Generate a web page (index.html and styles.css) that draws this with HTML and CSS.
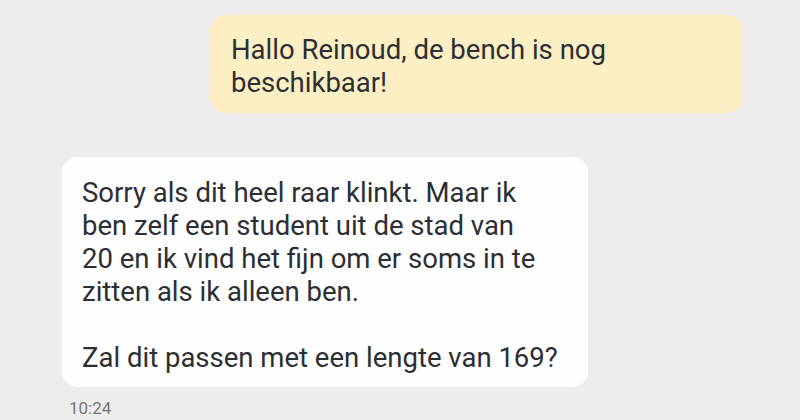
FILE: index.html
```html
<!DOCTYPE html>
<html lang="nl">
<head>
  <meta charset="UTF-8">
  <title>Chat</title>
  <link rel="stylesheet" href="styles.css">
</head>
<body>
  <div class="chat">
    <div class="bubble outgoing">
      Hallo Reinoud, de bench is nog beschikbaar!
    </div>

    <div class="bubble incoming">
      Sorry als dit heel raar klinkt. Maar ik<br>
      ben zelf een student uit de stad van<br>
      20 en ik vind het fijn om er soms in te<br>
      zitten als ik alleen ben.<br>
      <br>
      Zal dit passen met een lengte van 169?
    </div>
    <div class="time">10:24</div>
  </div>
</body>
</html>
```

FILE: styles.css
```css
body {
  margin: 0;
  background: #eeedeb;
  font-family: Roboto, 'Noto Sans', sans-serif;
  color: #2b2f33;
}
.chat {
  display: flex;
  flex-direction: column;
  padding-top: 15px;
  height: 420px;
  box-sizing: border-box;
  overflow: hidden;
}
.bubble {
  box-sizing: border-box;
  font-size: 27.5px;
  line-height: 33px;
  border-radius: 15px;
}
.outgoing {
  align-self: flex-start;
  margin-left: 210px;
  width: 532px;
  padding: 18px 21px 14px 21px;
  background: #fdefc4;
}
.incoming {
  align-self: flex-start;
  margin-left: 62px;
  margin-top: 44px;
  width: 526px;
  padding: 19px 12px 13px 20px;
  background: #fefefe;
  white-space: nowrap;
}
.time {
  margin-left: 69px;
  margin-top: 11px;
  font-size: 17px;
  line-height: 20px;
  color: #767676;
}
```
